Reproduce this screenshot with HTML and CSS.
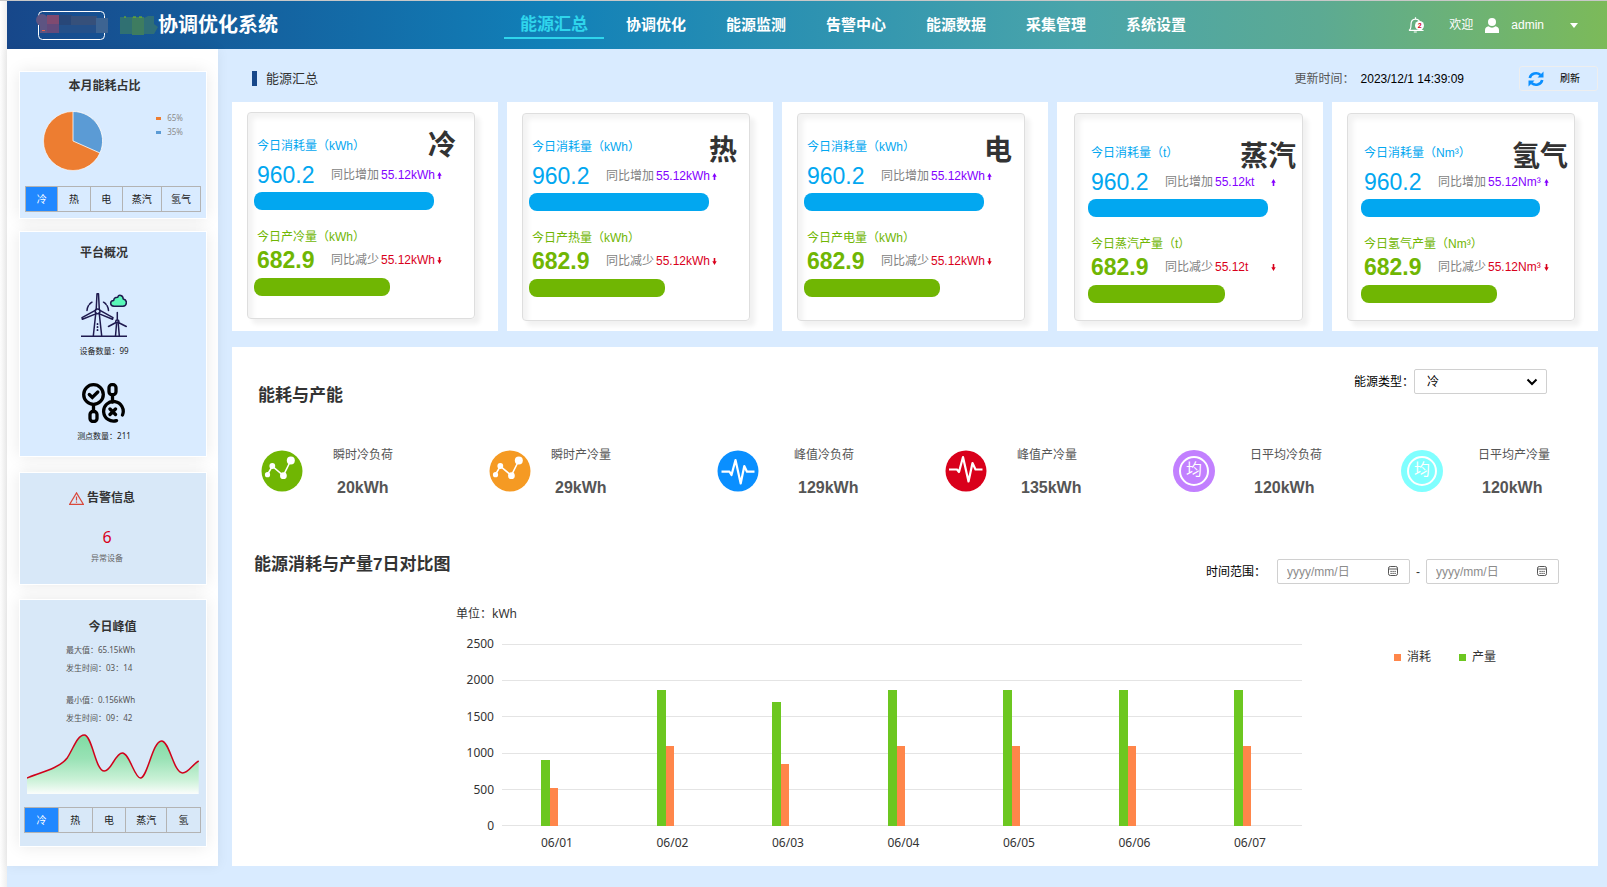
FILE: index.html
```html
<!DOCTYPE html>
<html lang="zh-CN">
<head>
<meta charset="utf-8">
<meta name="viewport" content="width=device-width, initial-scale=1">
<title>协调优化系统 - 能源汇总</title>
<link rel="stylesheet" href="styles.css">
</head>
<body>
<svg class="defs" aria-hidden="true">
  <symbol id="arrow-up" viewBox="0 0 5 8"><path d="M2.5 0L5 4.4H3.4V8H1.6V4.4H0z" fill="currentColor"/></symbol>
  <symbol id="arrow-down" viewBox="0 0 5 8"><path d="M2.5 8L5 3.6H3.4V0H1.6v3.6H0z" fill="currentColor"/></symbol>
  <symbol id="trend" viewBox="0 0 42 42"><circle cx="21" cy="21" r="20.5" fill="currentColor"/><path d="M6.5 24.5L11.3 16.2 22.3 25.5 29.8 10.5" fill="none" stroke="#fff" stroke-width="1.6"/><g fill="#fff"><circle cx="6.5" cy="24.7" r="2.6"/><circle cx="11.3" cy="16" r="2.9"/><circle cx="22.4" cy="25.7" r="3.4"/><circle cx="29.8" cy="10.6" r="4"/></g></symbol>
  <symbol id="pulse" viewBox="0 0 42 42"><circle cx="21" cy="21" r="20.5" fill="currentColor"/><path d="M4.500 21.700h8l2 3.300 4-15 5.200 23.500 3.600-17.500 2.700 5.700h7.500" fill="none" stroke="#fff" stroke-width="2.200" stroke-linejoin="round"/></symbol>
  <symbol id="beat" viewBox="0 0 42 42"><circle cx="21" cy="21" r="20.5" fill="currentColor"/><path d="M4 19.500h8l2 2.500 4-15 5.500 24.500 4-18.500 3 6.500h7" fill="none" stroke="#fff" stroke-width="2.200" stroke-linejoin="round"/></symbol>
  <symbol id="calendar" viewBox="0 0 12 12"><rect x="1.500" y="1.500" width="9" height="9" rx="1.800" fill="none" stroke="#555"/><path d="M1.500 4h9" stroke="#555"/><path d="M3.500 6.400h1.200m.8 0h1.200m.8 0h1.200M3.500 8.400h1.200m.8 0h1.200m.8 0h1.200" stroke="#333"/></symbol>
</svg>

<header class="topbar">
  <div class="brand">
    <svg class="brand-logo" width="72" height="32" viewBox="0 0 72 32" aria-hidden="true">
      <rect x="2.500" y="2.500" width="66" height="28" rx="4" fill="none" stroke="#fff"/>
      <circle cx="6" cy="11" r="6" fill="#5d5482"/><rect x="4" y="8" width="8" height="16" fill="#5d5482"/>
      <rect x="11" y="6" width="12" height="10" fill="#804a70"/><rect x="11" y="15" width="12" height="9" fill="#624a7b"/>
      <rect x="23" y="6" width="13" height="10" fill="#284778"/><rect x="35" y="7" width="26" height="9" fill="#36507a"/>
      <rect x="23" y="16" width="38" height="8" fill="#245089"/><rect x="60" y="9" width="12" height="15" fill="#3d6492"/>
      <rect x="6" y="21" width="3" height="1" fill="#e8604a"/>
    </svg>
    <svg class="brand-mark" width="38" height="20" viewBox="0 0 38 20" aria-hidden="true">
      <path d="M0 2h12v17H0z" fill="#307072"/><path d="M12 2h12v18H12z" fill="#3e7c60"/><path d="M24 3l4-2h6v8l4 3-4 7H24z" fill="#2f6e77"/>
      <path d="M4 2h2M13 2h3M19 2h3" stroke="#7fc01b"/>
    </svg>
    <h1 class="brand-name">协调优化系统</h1>
  </div>
  <nav class="nav">
    <a class="nav-link nav-link-active" href="#summary" aria-current="page">能源汇总</a>
    <a class="nav-link" href="#optimize">协调优化</a>
    <a class="nav-link" href="#monitor">能源监测</a>
    <a class="nav-link" href="#alarm">告警中心</a>
    <a class="nav-link" href="#data">能源数据</a>
    <a class="nav-link" href="#collect">采集管理</a>
    <a class="nav-link" href="#settings">系统设置</a>
  </nav>
  <div class="account">
    <button class="bell" type="button" aria-label="告警通知">
      <svg width="16" height="18" viewBox="0 0 16 18" aria-hidden="true"><path d="M1 14.300c2-1 2-2.500 2-5.600C3 5.300 4.800 3.200 7.500 3.200S12 5.300 12 8.700c0 3.100.3 4.600 2 5.600zM7.500 3V1.300M5.800 16h3" fill="none" stroke="#fff" stroke-width="1.200"/></svg>
      <span class="bell-count">2</span>
    </button>
    <span class="welcome">欢迎</span>
    <svg class="avatar" width="14" height="15" viewBox="0 0 14 15" aria-hidden="true"><circle cx="7" cy="4" r="4" fill="#fff"/><path d="M0 15v-3c0-2 1.500-3.500 3.500-3.700a5 5 0 0 0 7 0C12.500 8.500 14 10 14 12v3z" fill="#fff"/></svg>
    <button class="user" type="button">admin<svg width="8" height="5" viewBox="0 0 8 5" aria-hidden="true"><path d="M0 0h8L4 5z" fill="#fff"/></svg></button>
  </div>
</header>

<div class="layout">
  <aside class="sidebar">
    <section class="panel panel-share">
      <h2 class="panel-title">本月能耗占比</h2>
      <div class="share">
        <svg class="pie" width="60" height="60" viewBox="0 0 60 60" role="img" aria-label="能耗占比"><circle cx="30" cy="30" r="29.500" fill="#ed7d31" stroke="#fff" stroke-width=".6"/><path d="M30 30V.5A29.500 29.500 0 0 1 57 42z" fill="#5b9bd5" stroke="#fff" stroke-width=".8"/></svg>
        <ul class="share-legend"><li class="share-a">65%</li><li class="share-b">35%</li></ul>
      </div>
      <div class="tabs">
        <button class="tab tab-active" type="button">冷</button><button class="tab" type="button">热</button><button class="tab" type="button">电</button><button class="tab tab-wide" type="button">蒸汽</button><button class="tab tab-wide" type="button">氢气</button>
      </div>
    </section>

    <section class="panel panel-platform">
      <h2 class="panel-title">平台概况</h2>
      <svg class="turbine" width="46" height="44" viewBox="0 0 46 44" fill="none" stroke="#1f1a4f" stroke-width="1.500" stroke-linejoin="round" stroke-linecap="round" aria-hidden="true">
        <path d="M0 43.200h46M12.300 43L14.800 20M20.700 43l-2.500-23M15.200 16.500L16 .8h1.500l.8 15.700"/>
        <path d="M14.300 17.400L1 24.600l.4 1.600 14-5.600M19 17.400L32 24.600l-.5 1.600-13.700-5.600"/><circle cx="16.600" cy="18.300" r="2.400"/>
        <path d="M6 17.500c.3-4 2.300-6.800 5-8.300M27.500 17.500c-.3-4-2.300-6.800-5-8.300" stroke-dasharray="5 1.500"/>
        <path d="M36.300 19.500v7M36.300 29l9 4.500M35 29.500l-7.500 4M35.500 31l-1 12M37.300 31l1 12"/><circle cx="36.300" cy="28.500" r="1.600"/>
        <path d="M16.500 31v.2M16.500 34v.2M16.500 37v.2" stroke-width="1.800"/>
        <path d="M33 13.200c-4.500-.2-4.300-5.700-.3-5.800.2-3.300 3.300-3.200 4-3.200 1-3.200 5.500-2 5.500 1.800 4.500.7 4 7-.2 7.200z" fill="#59f7b8"/>
      </svg>
      <p class="stat">设备数量：99</p>
      <svg class="nodes" width="44" height="40" viewBox="0 0 44 40" fill="none" stroke="#000" stroke-width="3.300" stroke-linecap="round" aria-hidden="true">
        <circle cx="11.500" cy="11.500" r="9.800"/><path d="M7.300 11.500l3 3 5.500-5.500M11.500 22v6"/><rect x="8" y="28.500" width="7" height="10" rx="3"/>
        <rect x="27" y="1.700" width="7" height="10" rx="3"/><path d="M30.500 12.500V19"/>
        <path d="M34.500 37.600A9.800 9.800 0 1 1 40.500 32M28 26l5.500 5.500M33.500 26L28 31.500"/>
      </svg>
      <p class="stat">测点数量：211</p>
    </section>

    <section class="panel panel-alarm">
      <h2 class="panel-title panel-title-icon"><svg width="15" height="13" viewBox="0 0 15 13" fill="none" stroke="#d9483b" aria-hidden="true"><path d="M7.500.9L14.300 12.300H.7zM7.500 4.500v4M7.500 9.500v1.200" stroke-width="1.200"/></svg>告警信息</h2>
      <p class="alarm-count">6</p>
      <p class="alarm-note">异常设备</p>
    </section>

    <section class="panel panel-peak">
      <h2 class="panel-title">今日峰值</h2>
      <div class="peak">
        <p class="peak-line">最大值：65.15kWh</p>
        <p class="peak-line">发生时间：03：14</p>
        <p class="peak-line peak-line-next">最小值：0.156kWh</p>
        <p class="peak-line">发生时间：09：42</p>
      </div>
      <svg class="peak-chart" viewBox="0 0 171 60" preserveAspectRatio="none" role="img" aria-label="今日峰值曲线">
        <defs><linearGradient id="fade" x1="0" y1="0" x2="0" y2="1"><stop offset="0" stop-color="#7fdba3"/><stop offset=".4" stop-color="#99e2b5"/><stop offset=".75" stop-color="#c9f1d6"/><stop offset="1" stop-color="#fbfdfc"/></linearGradient></defs>
        <path d="M0 44C12 39 33 34 40 24C46 15 50 1 57 1C65 1 68 37 77 37C84 37 88 19 95 19C102 19 107 44 113 44C120 44 125 7 134 7C142 7 146 39 155 39C161 39 164 31 171 27V60H0z" fill="url(#fade)"/>
        <path d="M0 44C12 39 33 34 40 24C46 15 50 1 57 1C65 1 68 37 77 37C84 37 88 19 95 19C102 19 107 44 113 44C120 44 125 7 134 7C142 7 146 39 155 39C161 39 164 31 171 27" fill="none" stroke="#d0021b" stroke-width="1.500"/>
      </svg>
      <div class="tabs">
        <button class="tab tab-active" type="button">冷</button><button class="tab" type="button">热</button><button class="tab" type="button">电</button><button class="tab tab-wide" type="button">蒸汽</button><button class="tab" type="button">氢</button>
      </div>
    </section>
  </aside>

  <main class="main">
    <div class="toolbar">
      <h2 class="page-title">能源汇总</h2>
      <div class="update"><span>更新时间：</span><time class="update-time" datetime="2023-12-01T14:39:09">2023/12/1 14:39:09</time></div>
      <button class="refresh" type="button"><svg width="16" height="16" viewBox="0 0 16 16" fill="none" stroke="#0a8fff" stroke-width="2.600" aria-hidden="true"><path d="M1.800 7A6.300 5.800 0 0 1 12.500 4M14.200 9A6.300 5.800 0 0 1 3.500 12"/><path d="M15.500.5v6h-6zM.5 15.500v-6h6z" fill="#0a8fff" stroke="none"/></svg>刷新</button>
    </div>

    <div class="cards">
      <article class="card">
        <div class="card-box">
          <div class="card-head"><h3 class="label label-use">今日消耗量（kWh）</h3><span class="kind">冷</span></div>
          <div class="figure"><b class="num num-use">960.2</b><span class="versus">同比增加</span><span class="delta delta-up">55.12kWh</span><svg class="arrow delta-up" width="5" height="7"><use href="#arrow-up"/></svg></div>
          <div class="bar bar-use" style="width:82%"></div>
          <h3 class="label label-make">今日产冷量（kWh）</h3>
          <div class="figure"><b class="num num-make">682.9</b><span class="versus">同比减少</span><span class="delta delta-down">55.12kWh</span><svg class="arrow delta-down" width="5" height="7"><use href="#arrow-down"/></svg></div>
          <div class="bar bar-make" style="width:62%"></div>
        </div>
      </article>
      <article class="card card-mid">
        <div class="card-box">
          <div class="card-head"><h3 class="label label-use">今日消耗量（kWh）</h3><span class="kind">热</span></div>
          <div class="figure"><b class="num num-use">960.2</b><span class="versus">同比增加</span><span class="delta delta-up">55.12kWh</span><svg class="arrow delta-up" width="5" height="7"><use href="#arrow-up"/></svg></div>
          <div class="bar bar-use" style="width:82%"></div>
          <h3 class="label label-make">今日产热量（kWh）</h3>
          <div class="figure"><b class="num num-make">682.9</b><span class="versus">同比减少</span><span class="delta delta-down">55.12kWh</span><svg class="arrow delta-down" width="5" height="7"><use href="#arrow-down"/></svg></div>
          <div class="bar bar-make" style="width:62%"></div>
        </div>
      </article>
      <article class="card card-mid">
        <div class="card-box">
          <div class="card-head"><h3 class="label label-use">今日消耗量（kWh）</h3><span class="kind">电</span></div>
          <div class="figure"><b class="num num-use">960.2</b><span class="versus">同比增加</span><span class="delta delta-up">55.12kWh</span><svg class="arrow delta-up" width="5" height="7"><use href="#arrow-up"/></svg></div>
          <div class="bar bar-use" style="width:82%"></div>
          <h3 class="label label-make">今日产电量（kWh）</h3>
          <div class="figure"><b class="num num-make">682.9</b><span class="versus">同比减少</span><span class="delta delta-down">55.12kWh</span><svg class="arrow delta-down" width="5" height="7"><use href="#arrow-down"/></svg></div>
          <div class="bar bar-make" style="width:62%"></div>
        </div>
      </article>
      <article class="card card-low card-steam">
        <div class="card-box">
          <div class="card-head"><h3 class="label label-use">今日消耗量（t）</h3><span class="kind">蒸汽</span></div>
          <div class="figure"><b class="num num-use">960.2</b><span class="versus">同比增加</span><span class="delta delta-up">55.12kt</span><svg class="arrow delta-up" width="5" height="7"><use href="#arrow-up"/></svg></div>
          <div class="bar bar-use" style="width:84%"></div>
          <h3 class="label label-make">今日蒸汽产量（t）</h3>
          <div class="figure"><b class="num num-make">682.9</b><span class="versus">同比减少</span><span class="delta delta-down">55.12t</span><svg class="arrow delta-down" width="5" height="7"><use href="#arrow-down"/></svg></div>
          <div class="bar bar-make" style="width:64%"></div>
        </div>
      </article>
      <article class="card card-low">
        <div class="card-box">
          <div class="card-head"><h3 class="label label-use">今日消耗量（Nm³）</h3><span class="kind">氢气</span></div>
          <div class="figure"><b class="num num-use">960.2</b><span class="versus">同比增加</span><span class="delta delta-up">55.12Nm³</span><svg class="arrow delta-up" width="5" height="7"><use href="#arrow-up"/></svg></div>
          <div class="bar bar-use" style="width:84%"></div>
          <h3 class="label label-make">今日氢气产量（Nm³）</h3>
          <div class="figure"><b class="num num-make">682.9</b><span class="versus">同比减少</span><span class="delta delta-down">55.12Nm³</span><svg class="arrow delta-down" width="5" height="7"><use href="#arrow-down"/></svg></div>
          <div class="bar bar-make" style="width:64%"></div>
        </div>
      </article>
    </div>

    <section class="detail">
      <div class="detail-head">
        <h2 class="detail-title">能耗与产能</h2>
        <div class="field">
          <label for="kind">能源类型：</label>
          <div class="select-wrap">
            <select class="control" id="kind"><option>冷</option><option>热</option><option>电</option><option>蒸汽</option><option>氢气</option></select>
            <svg class="chevron" width="12" height="8" viewBox="0 0 12 8" aria-hidden="true"><path d="M1.500 1.500L6 6l4.500-4.500" fill="none" stroke="#000" stroke-width="2"/></svg>
          </div>
        </div>
      </div>

      <div class="metrics">
        <div class="metric"><svg class="metric-icon icon-green" width="42" height="42"><use href="#trend"/></svg><div><p class="metric-name">瞬时冷负荷</p><p class="metric-value">20kWh</p></div></div>
        <div class="metric metric-tight"><svg class="metric-icon icon-orange" width="42" height="42"><use href="#trend"/></svg><div><p class="metric-name">瞬时产冷量</p><p class="metric-value">29kWh</p></div></div>
        <div class="metric metric-wide"><svg class="metric-icon icon-blue" width="42" height="42"><use href="#pulse"/></svg><div><p class="metric-name">峰值冷负荷</p><p class="metric-value">129kWh</p></div></div>
        <div class="metric"><svg class="metric-icon icon-red" width="42" height="42"><use href="#beat"/></svg><div><p class="metric-name">峰值产冷量</p><p class="metric-value">135kWh</p></div></div>
        <div class="metric metric-wide"><span class="metric-icon metric-badge icon-purple"><span class="ring">均</span></span><div><p class="metric-name">日平均冷负荷</p><p class="metric-value">120kWh</p></div></div>
        <div class="metric metric-wide"><span class="metric-icon metric-badge icon-cyan"><span class="ring">均</span></span><div><p class="metric-name">日平均产冷量</p><p class="metric-value">120kWh</p></div></div>
      </div>

      <div class="compare-head">
        <h2 class="detail-title">能源消耗与产量7日对比图</h2>
        <div class="range">
          <label class="range-label" for="from">时间范围：</label>
          <div class="date"><input class="control" id="from" type="text" placeholder="yyyy/mm/日"><svg class="date-icon" width="12" height="12"><use href="#calendar"/></svg></div>
          <span class="dash">-</span>
          <div class="date"><input class="control" id="to" type="text" placeholder="yyyy/mm/日" aria-label="结束日期"><svg class="date-icon" width="12" height="12"><use href="#calendar"/></svg></div>
        </div>
      </div>

      <div class="chart">
        <p class="unit">单位：kWh</p>
        <div class="axis-y"><span>2500</span><span>2000</span><span>1500</span><span>1000</span><span>500</span><span>0</span></div>
        <div class="plot">
          <div class="lines"><i></i><i></i><i></i><i></i><i></i><i></i></div>
          <div class="pairs">
            <div class="pair"><i class="made" style="height:36%"></i><i class="used" style="height:21%"></i></div>
            <div class="pair"><i class="made" style="height:75%"></i><i class="used" style="height:44%"></i></div>
            <div class="pair"><i class="made" style="height:68%"></i><i class="used" style="height:34%"></i></div>
            <div class="pair"><i class="made" style="height:75%"></i><i class="used" style="height:44%"></i></div>
            <div class="pair"><i class="made" style="height:75%"></i><i class="used" style="height:44%"></i></div>
            <div class="pair"><i class="made" style="height:75%"></i><i class="used" style="height:44%"></i></div>
            <div class="pair"><i class="made" style="height:75%"></i><i class="used" style="height:44%"></i></div>
          </div>
        </div>
        <ul class="legend"><li class="legend-used">消耗</li><li class="legend-made">产量</li></ul>
        <div class="axis-x"><span>06/01</span><span>06/02</span><span>06/03</span><span>06/04</span><span>06/05</span><span>06/06</span><span>06/07</span></div>
      </div>
    </section>
  </main>
</div>
</body>
</html>
```
FILE: styles.css
```css
* { box-sizing: border-box; }
body, h1, h2, h3, p, ul { margin: 0; padding: 0; }
ul { list-style: none; }
button, input, select { font: inherit; color: inherit; }
button { padding: 0; border: 0; background: none; cursor: pointer; }
svg { display: block; flex: none; }

body {
  min-height: 100vh;
  padding-left: 7px;
  border-top: 1px solid #c8c8c8;
  background: linear-gradient(90deg, #fff, #efefef 7px, #d9ebff 7px);
  font: 12px/18px "Liberation Sans", "Noto Sans CJK SC", sans-serif;
  color: #333;
}
.defs { position: absolute; width: 0; height: 0; }

/* top bar */
.topbar {
  display: flex;
  align-items: center;
  height: 48px;
  padding: 0 29px;
  background: linear-gradient(90deg, #17478a, #1180b8 34%, #4aa5aa 67%, #5caa93 82%, #7cba59);
  color: #fff;
}
.brand { display: flex; align-items: center; width: 468px; }
.brand-mark { margin-left: 12px; }
.brand-name { font-size: 20px; line-height: 28px; }
.nav { display: flex; flex: 1; }
.nav-link {
  width: 100px;
  height: 28px;
  padding-top: 4px;
  color: #fff;
  font-size: 15px;
  font-weight: bold;
  line-height: 20px;
  text-align: center;
  text-decoration: none;
}
.nav-link-active { margin-right: 2px; border-bottom: 2px solid #2fd5ec; color: #2fd5ec; font-size: 17px; }
.account { display: flex; align-items: center; }
.bell { position: relative; width: 16px; margin-right: 25px; }
.bell-count {
  position: absolute;
  left: 7px;
  top: 5px;
  width: 9px;
  height: 9px;
  border-radius: 5px;
  background: #fff;
  color: #d9001b;
  font-size: 7px;
  font-weight: bold;
  line-height: 9px;
}
.avatar { margin: 0 12px; }
.user { display: flex; align-items: center; gap: 26px; }

.layout { display: flex; align-items: flex-start; }

/* sidebar */
.sidebar {
  flex: none;
  width: 211px;
  padding: 23px 12px 20px 13px;
  background: #fff;
  box-shadow: 0 0 12px rgba(0, 0, 0, .06);
  font-family: "Noto Sans", "Noto Sans CJK SC", sans-serif;
}
.panel { background: #d9ebff; box-shadow: 0 0 0 1px #fff, 0 0 16px rgba(0, 0, 0, .1); }
.panel + .panel { margin-top: 16px; }
.panel-title { font-size: 12px; line-height: 18px; text-align: center; }
.panel-share { padding: 5px 5px 6px; }
.panel-share .panel-title { padding-right: 17px; }
.share { display: flex; justify-content: space-between; margin: 16px 18px 15px 18px; }
.share-legend { color: #8c8c8c; font-size: 8px; line-height: 14px; }
.share-legend li { display: flex; align-items: center; gap: 6px; }
.share-legend li::before { content: ""; width: 5px; height: 3px; background: #ed7d31; }
.share-legend .share-b::before { background: #5b9bd5; }
.tabs { display: flex; border: 1px solid #b3b3b3; }
.tab { flex: 32 1 0; height: 24px; font-size: 10px; line-height: 22px; color: #222; }
.tab + .tab { border-left: 1px solid #b3b3b3; }
.tab-wide { flex-grow: 39; }
.tab-active { background: #2188ff; color: #fff; }
.sidebar .panel-platform { margin-top: 14px; padding: 12px 18px 14px 0; }
.turbine { margin: 31px auto 8px; }
.nodes { margin: 26px auto 7px; }
.stat { color: #222; font-size: 8px; line-height: 12px; text-align: center; }
.sidebar .panel-alarm { margin-top: 17px; padding: 16px 12px 20px 0; background: #d8e8f8; }
.panel-title-icon { display: flex; align-items: center; justify-content: center; gap: 3px; padding-right: 10px; }
.alarm-count { margin-top: 20px; color: #d9001b; font-size: 16px; line-height: 20px; text-align: center; }
.alarm-note { margin-top: 5px; color: #666; font-size: 8px; line-height: 12px; text-align: center; }
.panel-peak { padding: 18px 5px 13px 4px; background: #d8e8f8; }
.peak { margin: 8px 0 10px 42px; color: #555; font-size: 8px; line-height: 12px; }
.peak-line + .peak-line { margin-top: 6px; }
.peak .peak-line-next { margin-top: 20px; }
.peak-chart { width: 97%; height: 60px; margin: 0 auto 13px 3px; }

/* page toolbar */
.main { flex: 1; min-width: 0; padding: 0 9px 21px 14px; }
.toolbar { display: flex; align-items: center; height: 53px; padding-top: 6px; }
.page-title {
  flex: 1;
  margin-left: 20px;
  font-size: 13px;
  font-weight: normal;
  line-height: 15px;
  padding-left: 9px;
  border-left: 5px solid #17478a;
}
.update { display: flex; gap: 6px; color: #555; }
.update-time { color: #000; }
.refresh {
  display: flex;
  align-items: center;
  gap: 16px;
  width: 79px;
  height: 25px;
  margin-left: 55px;
  padding-left: 8px;
  border: 1px solid #eee;
  border-radius: 3px;
  color: #000;
  font-size: 10px;
}

/* energy cards */
.cards { display: grid; grid-template-columns: repeat(5, 1fr); gap: 9px; }
.card { padding: 10px 23px 12px 15px; background: #fff; }
.card-mid, .card-low { padding: 11px 23px 10px 15px; }
.card-steam { padding-right: 20px; padding-left: 17px; }
.card-box {
  height: 100%;
  padding: 19px 0 22px 6px;
  border: 1px solid #dedede;
  border-radius: 4px;
  box-shadow: 5px 5px 5px rgba(0, 0, 0, .06), inset 5px 5px 5px rgba(0, 0, 0, .05);
}
.card-mid .card-box { padding-bottom: 23px; }
.card-low .card-box { padding: 25px 0 17px 13px; }
.card-head { display: flex; align-items: center; justify-content: space-between; height: 28px; padding-right: 18px; }
.card-mid .card-head { padding-right: 12px; }
.card-low .card-head { padding-right: 6px; }
.kind { font-size: 28px; font-weight: bold; line-height: 28px; }
.card-mid .kind, .card-low .kind { padding-top: 8px; }
.label { padding-left: 3px; font-size: 12px; font-weight: normal; line-height: 18px; white-space: nowrap; }
.label-use, .num-use { color: #02a7f0; }
.label-make, .num-make { color: #70b603; }
.figure { display: flex; align-items: center; height: 28px; margin-top: 1px; padding-left: 3px; white-space: nowrap; }
.label-make + .figure { margin-top: 0; }
.num { width: 74px; font-size: 23px; line-height: 28px; }
.num-use { font-weight: normal; }
.versus { color: #7f7f7f; }
.delta { width: 56px; margin-left: 2px; }
.delta-up { color: #8400ff; }
.delta-down { color: #d9001b; }
.bar { height: 18px; margin-top: 3px; border-radius: 8px; }
.bar-use { margin-bottom: 18px; background: #02a7f0; }
.bar-make { margin-top: 4px; background: #70b603; }

/* detail section */
.detail { margin-top: 16px; padding: 22px 39px 14px 22px; background: #fff; }
.detail-title { font-size: 17px; line-height: 24px; }
.detail-head, .compare-head { display: flex; align-items: flex-start; justify-content: space-between; }
.detail-head { padding: 0 12px 0 4px; }
.detail-head .detail-title { margin-top: 15px; }
.field { display: flex; align-items: center; color: #000; }
.select-wrap, .date { position: relative; width: 133px; }
.control {
  display: block;
  width: 100%;
  height: 25px;
  padding: 0 12px;
  border: 1px solid #d0d0d0;
  border-radius: 2px;
  background: #fff;
  appearance: none;
}
.chevron { position: absolute; right: 9px; top: 9px; pointer-events: none; }
.metrics { display: grid; grid-template-columns: repeat(6, minmax(0, 228px)); margin: 38px -74px 0 7px; }
.metric { display: flex; gap: 30px; white-space: nowrap; }
.metric-tight { gap: 20px; }
.metric-wide { gap: 35px; }
.metric-icon { flex: none; width: 42px; height: 42px; margin-top: 4px; }
.icon-green { color: #70b603; }
.icon-orange { color: #f59a23; }
.icon-blue { color: #0a8fff; }
.icon-red { color: #d9001b; }
.icon-purple { background: #c280ff; }
.icon-cyan { background: #80ffff; }
.metric-badge { display: grid; place-items: center; border-radius: 50%; }
.ring { width: 30px; height: 30px; border: 2px solid #fff; border-radius: 50%; color: #fff; font-size: 16px; line-height: 24px; text-align: center; }
.metric-name { color: #555; }
.metric-value { margin: 14px 0 0 4px; color: #555; font-size: 16px; font-weight: bold; line-height: 20px; }
.compare-head { margin-top: 54px; }
.compare-head .detail-title { margin-top: 1px; }
.range { display: flex; align-items: center; margin-top: 7px; }
.range-label { margin-right: 11px; color: #000; }
.date .control { padding: 0 30px 0 9px; }
.control::placeholder { color: #8c8c8c; opacity: 1; }
.date-icon { position: absolute; right: 11px; top: 6px; }
.dash { width: 16px; text-align: center; }

/* seven-day chart */
.chart {
  display: grid;
  grid-template-columns: 38px 1fr 165px;
  grid-template-rows: 31px 182px 18px;
  row-gap: 8px;
  margin: 21px 0 0 202px;
  font-family: "Noto Sans", "Noto Sans CJK SC", sans-serif;
}
.unit { grid-column: 1 / -1; white-space: nowrap; }
.axis-y { display: flex; flex-direction: column; justify-content: space-between; margin: -9px 0; text-align: right; }
.plot { position: relative; margin: 0 92px 0 8px; }
.plot, .axis-y, .legend { grid-row: 2; }
.lines { position: absolute; inset: 0; display: flex; flex-direction: column; justify-content: space-between; }
.lines i { height: 1px; background: #e4e4e4; }
.pairs { position: relative; display: flex; justify-content: space-between; height: 100%; padding: 0 51px 0 39px; }
.pair { display: flex; align-items: flex-end; width: 17px; }
.made { width: 9px; background: #6cc720; }
.used { width: 8px; background: #ff864a; }
.legend { display: flex; gap: 28px; margin-top: 4px; white-space: nowrap; }
.legend li { display: flex; align-items: center; gap: 6px; height: 18px; }
.legend li::before { content: ""; width: 7px; height: 7px; background: #ff864a; }
.legend .legend-made::before { background: #6cc720; }
.axis-x { grid-column: 2; grid-row: 3; display: flex; justify-content: space-between; margin: 0 92px 0 8px; padding: 0 51px 0 39px; }
.axis-x span { width: 17px; white-space: nowrap; }
```
